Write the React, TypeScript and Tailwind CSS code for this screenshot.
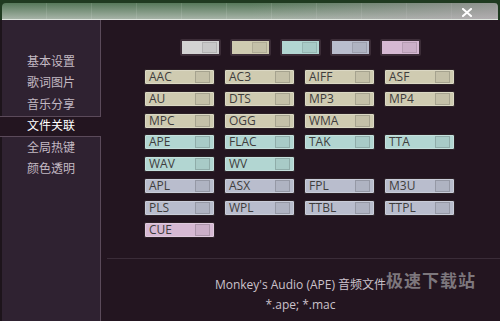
import React from 'react';

type Tone = 'beige' | 'teal' | 'blue' | 'pink' | 'gray';

const toneClass: Record<Tone, string> = {
  beige: 'bg-[#cfcbb1]',
  teal: 'bg-[#b2d6d2]',
  blue: 'bg-[#b9bdcd]',
  pink: 'bg-[#d6b9d3]',
  gray: 'bg-[#d3d3d3]',
};

const menu = ['基本设置', '歌词图片', '音乐分享', '文件关联', '全局热键', '颜色透明'];

// null = empty cell
const rows: { tone: Tone; items: (string | null)[] }[] = [
  { tone: 'beige', items: ['AAC', 'AC3', 'AIFF', 'ASF'] },
  { tone: 'beige', items: ['AU', 'DTS', 'MP3', 'MP4'] },
  { tone: 'beige', items: ['MPC', 'OGG', 'WMA', null] },
  { tone: 'teal', items: ['APE', 'FLAC', 'TAK', 'TTA'] },
  { tone: 'teal', items: ['WAV', 'WV', null, null] },
  { tone: 'blue', items: ['APL', 'ASX', 'FPL', 'M3U'] },
  { tone: 'blue', items: ['PLS', 'WPL', 'TTBL', 'TTPL'] },
  { tone: 'pink', items: ['CUE', null, null, null] },
];

const swatches: Tone[] = ['gray', 'beige', 'teal', 'blue', 'pink'];

const Swatch: React.FC<{ tone: Tone }> = ({ tone }) => (
  <div
    className={`flex h-[17px] w-[41px] items-center rounded-[2px] border-2 border-[#3c2d38] ${toneClass[tone]}`}
  >
    <div className="ml-auto mr-[2px] h-[11px] w-[15px] border border-black/10 bg-black/5" />
  </div>
);

const FormatBox: React.FC<{ label: string; tone: Tone }> = ({ label, tone }) => (
  <div
    className={`flex h-[16px] w-[71px] items-center rounded-[2px] border border-[#2b2026] pl-[4px] shadow-[inset_0_0_0_1px_rgba(255,255,255,0.25)] ${toneClass[tone]}`}
  >
    <span className="text-[12px] leading-none text-[#3f3d3d]">{label}</span>
    <div className="ml-auto mr-[4px] h-[12px] w-[15px] border border-black/15 bg-black/5" />
  </div>
);

const App: React.FC = () => {
  return (
    <div
      className="flex h-[321px] w-[500px] flex-col overflow-hidden bg-[#1f3a20]"
      style={{ fontFamily: '"Open Sans", "Noto Sans CJK SC", sans-serif' }}
    >
      {/* title bar */}
      <div className="mx-[2px] mt-[3px] flex h-[17px] shrink-0 items-center rounded-t-[4px] border-b border-[#dfe6df] bg-gradient-to-b from-[#56785a] to-[#a6b3a7] relative">
        <div className="absolute inset-0 flex">
          {Array.from({ length: 11 }).map((_, i) => (
            <div key={i} className="h-full w-[45px] shrink-0 border-r border-white/10" />
          ))}
        </div>
        <div className="absolute inset-0 rounded-t-[4px] bg-gradient-to-r from-transparent via-transparent to-[#b9a9b6]/60" />
        <svg className="absolute left-[460px] top-[5px]" width="10" height="9" viewBox="0 0 10 9">
          <path d="M1 1 L9 8 M9 1 L1 8" stroke="#ffffff" strokeWidth="2" strokeLinecap="square" />
        </svg>
      </div>

      {/* body */}
      <div className="flex flex-1 bg-[#231520]">
        {/* sidebar */}
        <div className="flex w-[101px] shrink-0 flex-col border-l-2 border-r border-l-[#1d141b] border-r-[#5b4a5a] bg-[#2f2231] pt-[31px]">
          {menu.map((m) =>
            m === '文件关联' ? (
              <div
                key={m}
                className="-mr-px -ml-[2px] flex h-[21.5px] items-center border-y border-[#5b4a5a] bg-[#231520] pl-[27px] text-[12px] text-white"
              >
                {m}
              </div>
            ) : (
              <div key={m} className="flex h-[21.5px] items-center pl-[25px] text-[12px] text-[#c3b9c3]">
                {m}
              </div>
            ),
          )}
        </div>

        {/* main */}
        <div className="flex flex-1 flex-col">
          <div className="flex gap-[9px] pl-[79px] pt-[19px]">
            {swatches.map((t) => (
              <Swatch key={t} tone={t} />
            ))}
          </div>

          <div className="mt-[13px] flex flex-col gap-[5.8px] pl-[43px]">
            {rows.map((r, i) => (
              <div key={i} className="flex gap-[9px]">
                {r.items.map((it, j) =>
                  it ? (
                    <FormatBox key={j} label={it} tone={r.tone} />
                  ) : (
                    <div key={j} className="h-[16px] w-[71px]" />
                  ),
                )}
              </div>
            ))}
          </div>

          <div className="mt-[20px] ml-[6px] h-px bg-[#3a2c38]" />

          <div className="relative flex flex-col items-center pt-[16px] text-[12px] text-[#cbc2cb]">
            <div className="relative leading-[20px]">
              Monkey's Audio (APE) 音频文件
              <span className="absolute left-full top-[-4px] whitespace-nowrap text-[17px] font-bold tracking-[1px] text-[#7d777d]">
                极速下载站
              </span>
            </div>
            <div className="leading-[20px]">*.ape; *.mac</div>
          </div>
        </div>
      </div>
    </div>
  );
};

export default App;
